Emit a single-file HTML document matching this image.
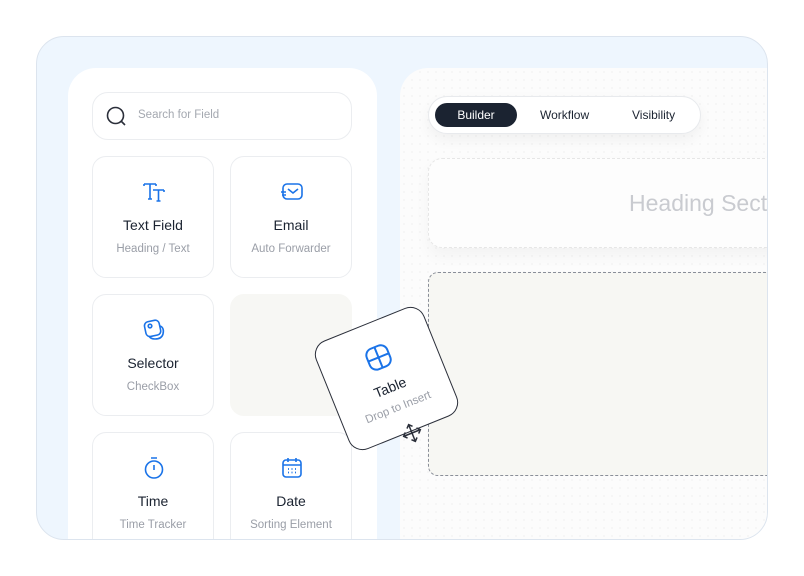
<!DOCTYPE html>
<html><head><style>
*{margin:0;padding:0;box-sizing:border-box}
body{width:804px;height:576px;background:#fff;position:relative;overflow:hidden;font-family:"Liberation Sans",sans-serif}
.frame{position:absolute;left:36px;top:36px;width:732px;height:504px;border-radius:28px;background:#eef6fe;border:1px solid #dce4ee;overflow:hidden}
.left{position:absolute;left:31px;top:31px;width:309px;height:500px;background:#fff;border-radius:28px}
.search{position:absolute;left:24px;top:24px;width:260px;height:48px;border:1px solid #ebedf0;border-radius:16px}
.search span{position:absolute;left:45px;top:16px;font-size:11.5px;color:#a4a8b0}
.card{position:absolute;width:122px;height:122px;border:1px solid #ebedf0;border-radius:14px;background:#fff;text-align:center}
.card svg{position:absolute;left:49px;top:23px}
.card .t{position:absolute;left:0;right:0;top:60px;font-size:14px;color:#1b2331}
.card .s{position:absolute;left:0;right:0;top:86px;font-size:11.5px;color:#9a9ea7}
.right{position:absolute;left:363px;top:31px;width:400px;height:500px;border-radius:28px 0 0 0;background-color:#fcfcfc;background-image:radial-gradient(#e8e8e8 0.7px,transparent 0.8px);background-size:8px 8px}
.tabs{position:absolute;left:28px;top:28px;width:273px;height:38px;border:1px solid #e8eaed;border-radius:19px;background:#fff;box-shadow:0 6px 14px rgba(0,0,0,.05);font-size:12px;color:#1b2331}
.tabs div{position:absolute;top:11px}
.builder{position:absolute;left:6px;top:6px;width:82px;height:24px;border-radius:12px;background:#1b2331;color:#fff;text-align:center;line-height:24px}
.head{position:absolute;left:28px;top:90px;width:400px;height:90px;border:1px dashed #e6e6e6;border-radius:14px;background:#fdfdfd;box-shadow:0 8px 16px rgba(0,0,0,.04)}
.head span{position:absolute;left:200px;top:31px;font-size:23px;color:#c9cbd0;white-space:nowrap}
.big{position:absolute;left:28px;top:204px;width:400px;height:204px;border:1px dashed #8a8f99;border-radius:10px;background:#f7f7f3}
.drag{position:absolute;left:328px;top:320px;width:117px;height:117px;border:1.3px solid #2b2f3a;border-radius:15px;background:#fff;transform:rotate(-22deg);text-align:center}
</style></head><body>
<div class="frame">
 <div class="left">
  <div class="search"><svg width="22" height="22" style="position:absolute;left:13px;top:13px" viewBox="0 0 22 22"><circle cx="9.5" cy="9.5" r="8" fill="none" stroke="#2b2f3a" stroke-width="1.6"/><path d="M15.5 15.5l3.5 3.5" stroke="#2b2f3a" stroke-width="1.6"/></svg><span>Search for Field</span></div>
  <div class="card" style="left:24px;top:88px"><svg width="24" height="24" viewBox="0 0 24 24" fill="none" stroke="#1a73e8" stroke-width="1.6"><path d="M2 4h12M8 4v15M6 19h4M2 4v2M14 4v2M11 10h11M16.5 10v11M14.5 21h4M22 10v2"/></svg><div class="t">Text Field</div><div class="s">Heading / Text</div></div>
  <div class="card" style="left:162px;top:88px"><svg width="24" height="24" viewBox="0 0 24 24" fill="none" stroke="#1a73e8" stroke-width="1.6"><rect x="3" y="4" width="19" height="15" rx="4"/><path d="M8 9l5 4 5-4M1 12h5M2 15h4"/></svg><div class="t">Email</div><div class="s">Auto Forwarder</div></div>
  <div class="card" style="left:24px;top:226px"><svg width="24" height="24" viewBox="0 0 24 24" fill="none" stroke="#1a73e8" stroke-width="1.6"><rect x="3" y="3" width="15" height="15" rx="4" transform="rotate(-12 10 10)"/><path d="M18 8c3 1 4 4 3 8-1 4-4 5-8 5-3 0-5-1-6-3"/><circle cx="8" cy="8" r="1.8"/></svg><div class="t">Selector</div><div class="s">CheckBox</div></div>
  <div class="card" style="left:162px;top:226px;background:#f7f7f4;border-color:#f7f7f4"></div>
  <div class="card" style="left:24px;top:364px"><svg width="24" height="24" viewBox="0 0 24 24" fill="none" stroke="#1a73e8" stroke-width="1.6"><circle cx="12" cy="13.5" r="8.5"/><path d="M9 2h6M12 9v5"/></svg><div class="t">Time</div><div class="s">Time Tracker</div></div>
  <div class="card" style="left:162px;top:364px"><svg width="24" height="24" viewBox="0 0 24 24" fill="none" stroke="#1a73e8" stroke-width="1.6"><rect x="3" y="4" width="18" height="17" rx="3"/><path d="M3 9h18M8 2v4M16 2v4"/><path d="M8 13h1M11.5 13h1M15 13h1M8 16.5h1M11.5 16.5h1M15 16.5h1" stroke-width="1.8"/></svg><div class="t">Date</div><div class="s">Sorting Element</div></div>
 </div>
 <div class="right">
  <div class="tabs"><div class="builder" style="top:6px">Builder</div><div style="left:111px">Workflow</div><div style="left:203px">Visibility</div></div>
  <div class="head"><span>Heading Section</span></div>
  <div class="big"></div>
 </div>
</div>
<div class="drag"><svg width="26" height="26" viewBox="0 0 26 26" style="position:absolute;left:45px;top:22px" fill="none" stroke="#1a73e8" stroke-width="2"><rect x="2" y="2" width="22" height="22" rx="7"/><path d="M13 2v22M2 13h22"/></svg><div style="position:absolute;left:0;right:0;top:59px;font-size:14px;color:#1b2331">Table</div><div style="position:absolute;left:0;right:0;top:83px;font-size:11.5px;color:#9a9ea7">Drop to Insert</div></div>
<svg width="24" height="24" viewBox="0 0 24 24" style="position:absolute;left:400px;top:421px" fill="none" stroke="#2b2f3a" stroke-width="1.5" transform="rotate(-22)"><path d="M12 3v18M3 12h18M9 6l3-3 3 3M9 18l3 3 3-3M6 9l-3 3 3 3M18 9l3 3-3 3"/></svg>
</body></html>
